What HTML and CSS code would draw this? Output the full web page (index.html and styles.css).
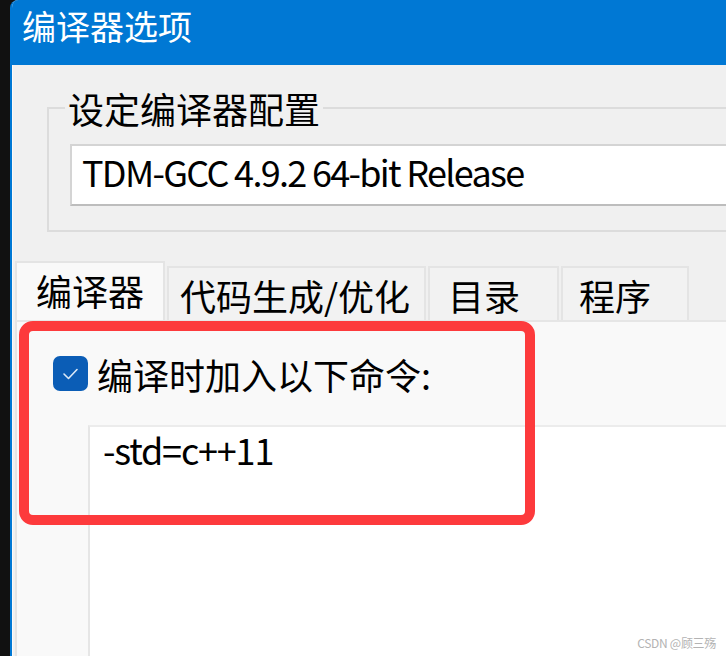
FILE: index.html
```html
<!DOCTYPE html>
<html lang="zh-CN">
<head>
<meta charset="utf-8">
<title>编译器选项</title>
<link rel="stylesheet" href="styles.css">
</head>
<body>
<div class="screen">
  <div class="desk-edge"></div>
  <div class="window">
    <div class="titlebar">编译器选项</div>
    <div class="client">
      <fieldset class="group">
        <legend class="group-label">设定编译器配置</legend>
        <div class="combo">TDM-GCC 4.9.2 64-bit Release</div>
      </fieldset>
      <div class="tabs">
        <div class="tab tab-active tab-w1">编译器</div>
        <div class="tab tab-w2">代码生成/优化</div>
        <div class="tab tab-w3">目录</div>
        <div class="tab tab-w4">程序</div>
      </div>
      <div class="panel">
        <div class="check-row">
          <span class="checkbox">
            <svg width="35" height="35" viewBox="0 0 35 35">
              <rect x="0" y="0" width="35" height="35" rx="7" fill="#0b5db6"/>
              <path d="M11 18 L15.5 22.5 L24 13.5" fill="none" stroke="#dce9f7" stroke-width="1.6" stroke-linecap="round" stroke-linejoin="round"/>
            </svg>
          </span>
          <span class="check-label">编译时加入以下命令:</span>
        </div>
        <div class="editor">-std=c++11</div>
      </div>
    </div>
  </div>
  <div class="highlight"></div>
  <div class="watermark">CSDN @顾三殇</div>
</div>
</body>
</html>
```
FILE: styles.css
```css
html, body {
  margin: 0;
  padding: 0;
  background: #111111;
}

.screen {
  position: relative;
  width: 726px;
  height: 656px;
  overflow: hidden;
  display: flex;
  font-family: "Noto Sans CJK SC", sans-serif;
  color: #000;
}

.desk-edge {
  flex: none;
  width: 10px;
  background: #111111;
}

.window {
  flex: none;
  width: 900px;
  display: flex;
  flex-direction: column;
  background: #f0f0f0;
  border-left: 2px solid #0078d4;
  border-top-left-radius: 8px;
  overflow: hidden;
}

.titlebar {
  flex: none;
  height: 65px;
  box-sizing: border-box;
  background: #0078d4;
  color: #ffffff;
  font-size: 34px;
  line-height: 40px;
  padding: 6px 0 0 10px;
}

.client {
  flex: 1;
  display: flex;
  flex-direction: column;
  border-left: 1px solid #fafafa;
  min-height: 0;
}

.group {
  margin: 23px 0 0 34px;
  padding: 16px 0 24px 16px;
  border: 2px solid #dcdcdc;
  min-inline-size: 0;
}

.group-label {
  padding: 0 3px;
  font-size: 36px;
  line-height: 40px;
}

.combo {
  margin-left: 5px;
  height: 62px;
  box-sizing: border-box;
  background: #ffffff;
  border: 2px solid #d4d4d4;
  border-bottom-color: #bdbdbd;
  font-size: 36px;
  line-height: 50px;
  letter-spacing: -1.7px;
  padding: 0 0 0 10px;
}

.tabs {
  display: flex;
  align-items: flex-end;
  gap: 2px;
  margin: 29px 0 0 2px;
}

.tab {
  box-sizing: border-box;
  height: 54px;
  padding-top: 7px;
  font-size: 36px;
  line-height: 40px;
  background: #f2f2f2;
  border: 2px solid #e4e4e4;
  border-bottom: none;
  white-space: nowrap;
}

.tab-active {
  height: 59px;
  background: #f9f9f9;
}

.tab-w1 { width: 150px; padding-left: 19px; }
.tab-w2 { width: 259px; padding-left: 11px; }
.tab-w3 { width: 131px; padding-left: 18px; }
.tab-w4 { width: 128px; padding-left: 16px; }

.panel {
  flex: 1;
  display: flex;
  flex-direction: column;
  margin-left: 2px;
  background: #f9f9f9;
  border-top: 2px solid #e6e6e6;
  border-left: 2px solid #e4e4e4;
  padding: 34px 0 0 36px;
  min-height: 0;
}

.check-row {
  display: flex;
  align-items: center;
  gap: 9px;
  height: 35px;
}

.checkbox {
  display: block;
  width: 35px;
  height: 35px;
}

.checkbox svg {
  display: block;
}

.check-label {
  font-size: 36px;
  line-height: 40px;
  white-space: nowrap;
}

.editor {
  flex: 1;
  margin: 34px 0 0 35px;
  background: #ffffff;
  border-top: 2px solid #ececec;
  border-left: 2px solid #e6e6e6;
  padding: 2px 0 0 13px;
  font-size: 36px;
  line-height: 40px;
  letter-spacing: -1.2px;
}

.highlight {
  position: absolute;
  left: 19px;
  top: 321px;
  width: 516px;
  height: 204px;
  box-sizing: border-box;
  border: 10px solid #fd3a3c;
  border-radius: 14px;
}

.watermark {
  position: absolute;
  right: 10px;
  bottom: 5px;
  font-size: 12px;
  line-height: 16px;
  letter-spacing: -0.3px;
  color: #b3b3b3;
  white-space: nowrap;
}
```
